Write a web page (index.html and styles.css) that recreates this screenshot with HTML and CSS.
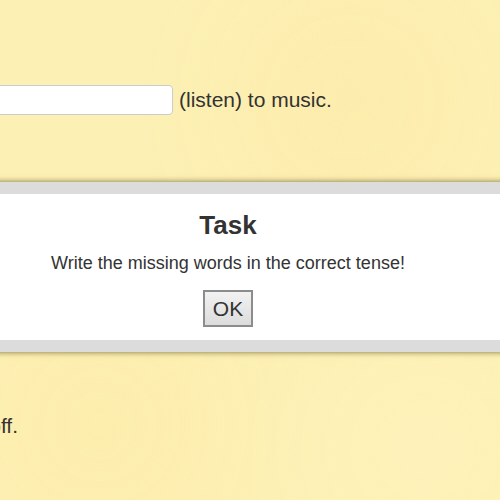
FILE: index.html
```html
<!DOCTYPE html>
<html lang="en">
<head>
    <meta charset="utf-8">
    <meta name="viewport" content="width=device-width, initial-scale=1.0">
    <title>Exercise</title>
    <link rel="stylesheet" href="styles.css">
</head>
<body>
    <main class="lesson">
        <div class="line gap-line">
            <input type="text" class="gap" aria-label="answer">
            <span>(listen) to music.</span>
        </div>
        <div class="line hidden-line">
            <span>The teacher</span>
        </div>
        <div class="line tail-line">
            <span class="tail">The concert was called off.</span>
        </div>
    </main>

    <div class="modal">
        <div class="modal-body">
            <h2 class="modal-title">Task</h2>
            <p class="modal-text">Write the missing words in the correct tense!</p>
            <button class="ok-button">OK</button>
        </div>
    </div>
</body>
</html>
```

FILE: styles.css
```css
:root {
    --page-bg: #fdf0b4;
    --text-color: #333;
    --modal-border: #dcdcdc;
}

* {
    box-sizing: border-box;
    margin: 0;
    padding: 0;
}

html, body {
    height: 100%;
    overflow: hidden;
}

body {
    font-family: 'Liberation Sans', Arial, sans-serif;
    color: var(--text-color);
    background-color: var(--page-bg);
    background-image:
        radial-gradient(circle at 70% 20%, rgba(251, 234, 166, 0.5), transparent 40%),
        radial-gradient(circle at 20% 85%, rgba(252, 236, 168, 0.6), transparent 35%),
        radial-gradient(circle at 85% 90%, rgba(255, 244, 192, 0.5), transparent 30%);
}

.lesson {
    display: flex;
    flex-direction: column;
    padding-top: 85px;
    font-size: 21px;
}

.line {
    display: flex;
    align-items: center;
    height: 30px;
}

.gap-line {
    gap: 6px;
}

.gap {
    width: 200px;
    height: 30px;
    margin-left: -27px;
    border: 1px solid #ccc;
    border-radius: 4px;
    background: #fff;
}

.hidden-line {
    margin-top: 80px;
    padding-left: 20px;
}

.tail-line {
    margin-top: 186px;
    width: 18px;
    justify-content: flex-end;
    white-space: nowrap;
}

.tail {
    flex-shrink: 0;
}

.modal {
    position: absolute;
    top: 182px;
    left: -72px;
    width: 600px;
    border: 12px solid var(--modal-border);
    box-shadow: 0 0 6px rgba(80, 70, 20, 0.75);
    background: #fff;
}

.modal-body {
    display: flex;
    flex-direction: column;
    align-items: center;
    padding: 16px 0 13px;
}

.modal-title {
    font-size: 26px;
    font-weight: bold;
    line-height: 30px;
}

.modal-text {
    margin-top: 13px;
    font-size: 18px;
    line-height: 21px;
}

.ok-button {
    margin-top: 16px;
    width: 50px;
    height: 37px;
    font-family: inherit;
    font-size: 21px;
    color: var(--text-color);
    border: 2px solid #8c8c8c;
    background: linear-gradient(#f2f2f2, #dcdcdc);
}
```
